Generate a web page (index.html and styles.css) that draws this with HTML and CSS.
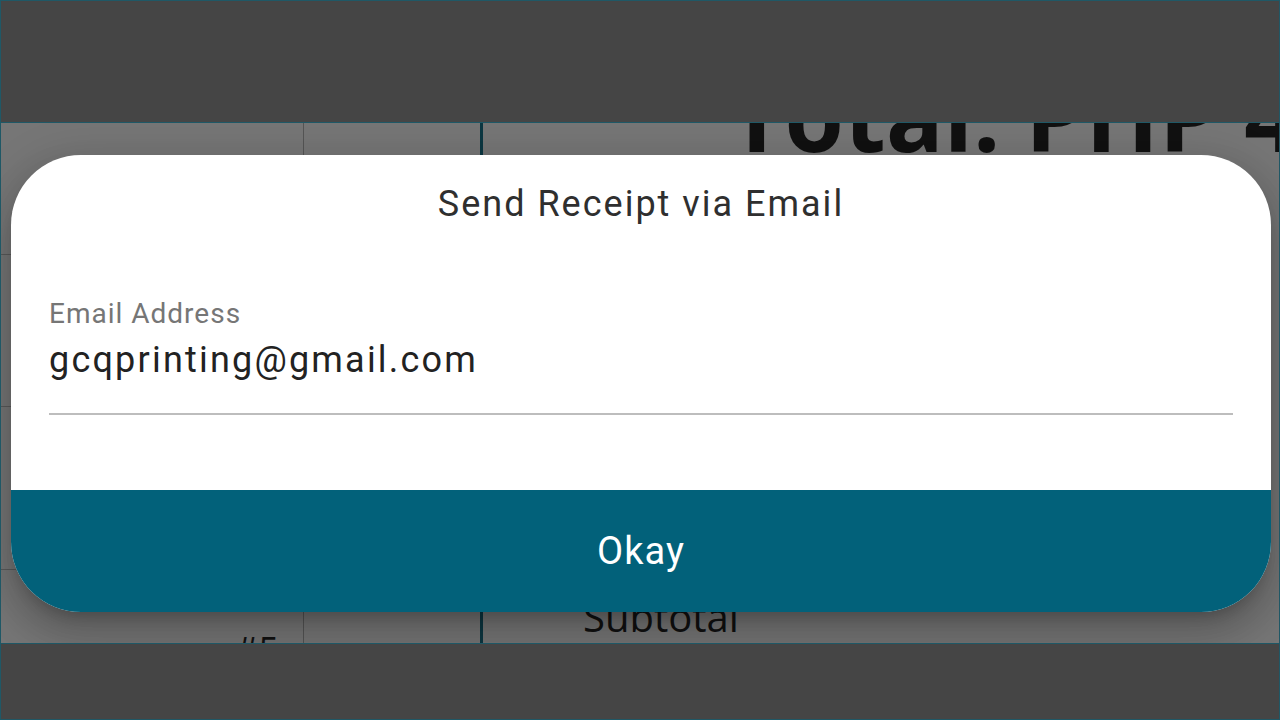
FILE: index.html
```html
<!DOCTYPE html>
<html>
<head>
<meta charset="utf-8">
<link rel="stylesheet" href="styles.css">
</head>
<body>
<div class="screen">
  <div class="topbar"></div>
  <div class="main">
    <div class="table">
      <div class="col col-num">
        <div class="row row-a"></div>
        <div class="row row-b"></div>
        <div class="row row-c"></div>
        <div class="row row-last"><span class="num">#5</span></div>
      </div>
      <div class="col col-mid"></div>
      <div class="col col-total">
        <div class="total">Total: PHP 4</div>
        <div class="subtotal">Subtotal</div>
      </div>
    </div>
    <div class="dialog">
      <div class="dialog-body">
        <h1 class="dialog-title">Send Receipt via Email</h1>
        <div class="field">
          <label class="field-label">Email Address</label>
          <div class="field-value">gcqprinting@gmail.com</div>
        </div>
      </div>
      <div class="dialog-action">Okay</div>
    </div>
  </div>
  <div class="bottombar"></div>
</div>
</body>
</html>
```
FILE: styles.css
```css
html, body {
  margin: 0;
  padding: 0;
}
body {
  width: 1280px;
  height: 720px;
  overflow: hidden;
  font-family: Roboto, "Noto Sans", sans-serif;
}
.screen {
  box-sizing: border-box;
  width: 1280px;
  height: 720px;
  border: 1px solid #1f5866;
  background: #454545;
  display: flex;
  flex-direction: column;
}
.topbar {
  height: 121px;
  flex: none;
  border-bottom: 1px solid #1f5866;
}
.main {
  position: relative;
  height: 520px;
  flex: none;
  overflow: hidden;
  background: #767676;
}
.bottombar {
  flex: 1;
  border-top: 1px solid #1f5866;
}
.table {
  display: flex;
  height: 100%;
}
.col {
  height: 100%;
}
.col-num {
  flex: none;
  width: 302px;
  border-right: 1px solid #555;
  display: flex;
  flex-direction: column;
}
.row {
  border-bottom: 1px solid #5a5a5a;
  flex: none;
}
.row-a { height: 131px; }
.row-b { height: 151px; }
.row-c { height: 162px; }
.row-last {
  border-bottom: none;
  flex: 1;
  display: flex;
  justify-content: flex-end;
  padding-right: 24px;
}
.num {
  font-family: "Open Sans", sans-serif;
  font-size: 36px;
  line-height: 1;
  color: #111;
  margin-top: 62px;
}
.col-mid {
  flex: none;
  width: 176px;
  border-right: 3px solid #0c3742;
}
.col-total {
  flex: 1;
  min-width: 0;
  display: flex;
  flex-direction: column;
  padding-left: 100px;
}
.total {
  font-family: "Open Sans", sans-serif;
  font-weight: 700;
  font-size: 96px;
  line-height: 96px;
  color: #111;
  white-space: nowrap;
  margin-top: -56px;
  margin-left: 146px;
}
.subtotal {
  font-family: "Open Sans", sans-serif;
  font-size: 40px;
  line-height: 40px;
  color: #111;
  margin-top: auto;
  margin-bottom: -2px;
  padding-bottom: 8px;
}
.dialog {
  position: absolute;
  left: 10px;
  top: 32px;
  width: 1260px;
  height: 457px;
  background: #fff;
  border-radius: 70px;
  overflow: hidden;
  display: flex;
  flex-direction: column;
  box-shadow: 0 11px 15px -7px rgba(0,0,0,0.2), 0 24px 38px 3px rgba(0,0,0,0.14), 0 9px 46px 8px rgba(0,0,0,0.12);
}
.dialog-body {
  flex: 1;
  padding: 27px 38px 0;
}
.dialog-title {
  margin: 0;
  font-size: 36px;
  line-height: 44px;
  font-weight: 400;
  letter-spacing: 2px;
  color: #2f2f2f;
  text-align: center;
}
.field {
  margin-top: 71px;
  border-bottom: 2px solid #bdbdbd;
  padding-bottom: 31px;
}
.field-label {
  display: block;
  font-size: 28px;
  line-height: 34px;
  letter-spacing: 1px;
  color: #767676;
}
.field-value {
  margin-top: 7px;
  font-size: 36px;
  line-height: 44px;
  letter-spacing: 2.2px;
  color: #222;
}
.dialog-action {
  height: 122px;
  flex: none;
  background: #02617a;
  color: #fff;
  font-size: 38px;
  letter-spacing: 1px;
  display: flex;
  align-items: center;
  justify-content: center;
}
```
